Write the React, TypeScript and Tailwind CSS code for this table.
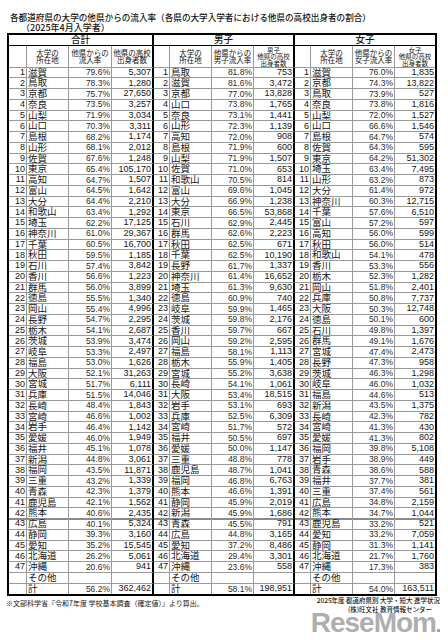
const parse = (s: string) =>
  s
    .trim()
    .split('\n')
    .map((l) => l.trim().split(' '))

const TOTAL = parse(`
滋賀 79.6% 5,307
鳥取 78.3% 1,280
京都 75.7% 27,650
奈良 73.5% 3,257
山梨 71.9% 3,034
山口 70.3% 3,311
島根 68.2% 1,174
山形 68.1% 2,012
佐賀 67.6% 1,248
東京 65.4% 105,170
高知 64.7% 1,507
富山 64.5% 1,642
大分 64.4% 2,210
和歌山 63.4% 1,292
埼玉 62.2% 17,125
神奈川 61.0% 29,367
千葉 60.5% 16,700
秋田 59.5% 1,185
石川 57.4% 3,842
香川 56.6% 1,223
群馬 56.0% 3,899
徳島 55.5% 1,340
岡山 55.4% 4,996
長野 54.7% 2,295
栃木 54.1% 2,687
茨城 53.9% 3,474
岐阜 53.3% 2,497
福島 53.0% 1,626
大阪 52.1% 31,263
宮城 51.7% 6,111
兵庫 51.5% 14,046
長崎 48.4% 1,843
宮崎 46.6% 1,002
岩手 46.4% 1,142
愛媛 46.0% 1,949
福井 45.1% 1,078
新潟 44.8% 3,061
福岡 43.5% 11,871
三重 43.2% 1,339
青森 42.3% 1,379
鹿児島 42.1% 1,562
熊本 40.6% 2,435
広島 40.1% 5,324
静岡 39.3% 3,160
愛知 35.2% 15,545
北海道 26.2% 5,061
沖縄 20.6% 941
`)

const MALE = parse(`
鳥取 81.8% 753
滋賀 81.6% 3,472
京都 77.0% 13,828
山口 73.8% 1,765
奈良 73.1% 1,441
山形 72.3% 1,139
高知 72.0% 908
島根 71.9% 600
山梨 71.9% 1,507
佐賀 71.0% 653
和歌山 70.5% 814
富山 69.6% 1,045
大分 66.9% 1,238
東京 66.5% 53,868
石川 62.9% 2,445
群馬 62.6% 2,223
秋田 62.5% 671
千葉 62.5% 10,190
長野 61.7% 1,337
神奈川 61.4% 16,652
埼玉 61.3% 9,630
徳島 60.9% 740
岐阜 59.9% 1,465
茨城 59.8% 2,176
香川 59.7% 667
岡山 59.2% 2,595
福島 58.1% 1,113
栃木 55.9% 1,405
宮城 55.2% 3,638
長崎 54.1% 1,061
大阪 53.4% 18,515
岩手 53.1% 693
兵庫 52.5% 6,309
宮崎 51.7% 572
福井 50.5% 697
愛媛 50.0% 1,147
三重 48.8% 778
鹿児島 48.7% 1,041
福岡 46.8% 6,763
熊本 46.6% 1,391
静岡 45.9% 2,019
新潟 45.9% 1,686
青森 45.5% 791
広島 44.8% 3,165
愛知 37.2% 8,486
北海道 29.4% 3,301
沖縄 23.6% 558
`)

const FEMALE = parse(`
滋賀 76.0% 1,835
京都 74.3% 13,822
鳥取 73.9% 527
奈良 73.8% 1,816
山梨 72.0% 1,527
山口 66.6% 1,546
島根 64.7% 574
佐賀 64.3% 595
東京 64.2% 51,302
埼玉 63.4% 7,495
山形 63.2% 873
大分 61.4% 972
神奈川 60.3% 12,715
千葉 57.6% 6,510
富山 57.2% 597
高知 56.0% 599
秋田 56.0% 514
和歌山 54.1% 478
香川 53.3% 556
栃木 52.3% 1,282
岡山 51.8% 2,401
兵庫 50.8% 7,737
大阪 50.3% 12,748
徳島 50.1% 600
石川 49.8% 1,397
群馬 49.1% 1,676
宮城 47.4% 2,473
長野 47.3% 958
茨城 46.3% 1,298
岐阜 46.0% 1,032
福島 44.6% 513
新潟 43.5% 1,375
長崎 42.3% 782
宮崎 41.3% 430
愛媛 41.3% 802
福岡 39.8% 5,108
岩手 38.9% 449
青森 38.6% 588
福井 37.7% 381
三重 37.4% 561
広島 34.8% 2,159
熊本 34.7% 1,044
鹿児島 33.2% 521
愛知 33.2% 7,059
静岡 31.3% 1,141
北海道 21.7% 1,760
沖縄 17.3% 383
`)

const num = "font-['Liberation_Sans','Noto_Sans_CJK_JP',sans-serif]"
const grid =
  'grid grid-cols-[18px_42px_43px_42px_16px_42px_42px_41px_16px_42px_42px_40px]'
const cell = 'flex items-center whitespace-nowrap leading-none border-r border-b border-[#9a9a9a]'
const thick = 'border-r-2 border-r-black'

function Part({
  cells,
  last,
  sep,
}: {
  cells: (string | number)[]
  last?: boolean
  sep?: boolean
}) {
  const b = sep ? 'border-b-2 border-b-[#8a8a8a]' : ''
  return (
    <>
      <div className={`${cell} ${b} ${num} justify-end pr-[1px] text-[9px]`}>{cells[0]}</div>
      <div className={`${cell} ${b} pl-[1px] text-[9.5px]`}>{cells[1]}</div>
      <div className={`${cell} ${b} ${num} justify-end pr-[1px] text-[8.5px] text-[#2a2a2a]`}>
        {cells[2]}
      </div>
      <div
        className={`${cell} ${b} ${num} justify-end pr-[1px] text-[9px] ${last ? 'border-r-0' : thick}`}
      >
        {cells[3]}
      </div>
    </>
  )
}

function Head({ who, last }: { who: '' | '男子' | '女子'; last?: boolean }) {
  const h = `${cell} justify-center text-center`
  return (
    <>
      <div className={h}></div>
      <div className={`${h} text-[7.5px] leading-[9px]`}>
        大学の
        <br />
        所在地
      </div>
      <div className={`${h} text-[7.5px] leading-[9px]`}>
        他県からの
        <br />
        {who}流入率
      </div>
      {who === '' ? (
        <div className={`${h} ${thick} text-[7.5px] leading-[9px]`}>
          他県の高校
          <br />
          出身者数
        </div>
      ) : (
        <div className={`${h} ${last ? 'border-r-0' : thick} text-[6.5px] leading-[7px]`}>
          {who}
          <br />
          他県の高校
          <br />
          出身者数
        </div>
      )}
    </>
  )
}

export default function App() {
  return (
    <div className="relative h-[640px] w-[448px] overflow-hidden bg-white text-[#151515] font-['Noto_Sans_CJK_JP',sans-serif]">
      <div className="pl-[10px] pt-[11px] text-[8.6px] leading-[12px] font-medium">
        各都道府県の大学の他県からの流入率（各県の大学入学者における他県の高校出身者の割合）
      </div>
      <div className="pl-[21px] text-[9px] leading-[10px] font-medium">（2025年4月入学者）</div>

      <div className="ml-[7px] w-[430px] border-2 border-black">
        <div className="grid h-[11px] grid-cols-[145px_141px_140px]">
          <div className={`${cell} ${thick} justify-center border-b-black text-[9.5px] font-medium`}>合計</div>
          <div className={`${cell} ${thick} justify-center border-b-black text-[9.5px] font-medium`}>男子</div>
          <div className={`${cell} justify-center border-r-0 border-b-black text-[9.5px] font-medium`}>女子</div>
        </div>
        <div className={`${grid} h-[21.5px]`}>
          <Head who="" />
          <Head who="男子" />
          <Head who="女子" last />
        </div>
        {TOTAL.map((r, i) => (
          <div key={i} className={`${grid} h-[10.75px]`}>
            <Part cells={[i + 1, ...r]} sep={i === 41} />
            <Part cells={[i + 1, ...MALE[i]]} sep={i === 41} />
            <Part cells={[i + 1, ...FEMALE[i]]} sep={i === 41} last />
          </div>
        ))}
        <div className={`${grid} h-[10.75px]`}>
          <Part cells={['', 'その他', '', '']} />
          <Part cells={['', 'その他', '', '']} />
          <Part cells={['', 'その他', '', '']} last />
        </div>
        <div className={`${grid} h-[10.75px] [&>div]:border-b-0`}>
          <Part cells={['', '計', '56.2%', '362,462']} />
          <Part cells={['', '計', '58.1%', '198,951']} />
          <Part cells={['', '計', '54.0%', '163,511']} last />
        </div>
      </div>

      <div className="flex items-start justify-between pl-[6px] pr-[8px]">
        <div className="pt-[3px] text-[7px] leading-[9px]">
          ※文部科学省『令和7年度 学校基本調査（確定値）』より算出。
        </div>
        <div className="flex flex-col items-end">
          <div className="text-[6.5px] leading-[9px] font-medium">2025年度 都道府県別 大学・短大 進学状況</div>
          <div className="pr-[8px] text-[6.5px] leading-[8px] font-medium">(株)旺文社 教育情報センター</div>
          <div className="-mt-[3px] flex items-end font-['Liberation_Sans',sans-serif] text-[28px] font-bold leading-[26px] tracking-[-1px] text-[#a3a3a3]/90">
            ReseMom
            <span className="mb-[4px] ml-[1px] h-[3px] w-[3px] bg-[#a3a3a3]"></span>
          </div>
        </div>
      </div>
    </div>
  )
}
